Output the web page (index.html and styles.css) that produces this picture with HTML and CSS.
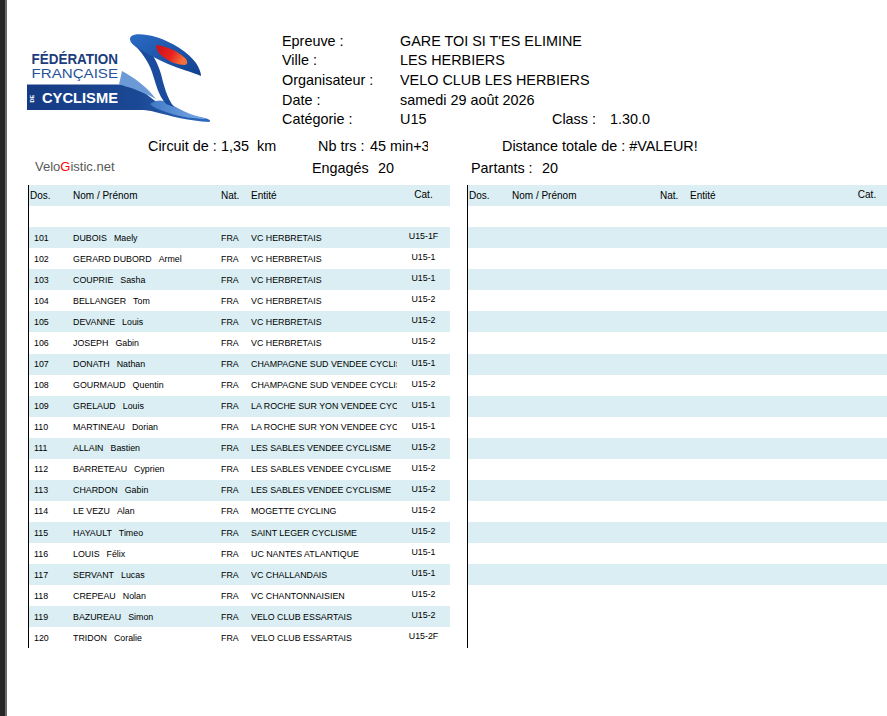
FILE: index.html
```html
<!DOCTYPE html>
<html lang="fr">
<head>
<meta charset="utf-8">
<title>Engagés - GARE TOI SI T'ES ELIMINE</title>
<link rel="stylesheet" href="styles.css">
</head>
<body>
<div class="page">
  <div class="edge"></div>
  <div class="sheet">
    <header class="top">
      <div class="logo-cell">
        <svg class="logo" width="190" height="92" viewBox="25 33 190 92" xmlns="http://www.w3.org/2000/svg">
          <defs>
            <linearGradient id="band" x1="0" y1="0" x2="1" y2="0">
              <stop offset="0" stop-color="#163a84"/>
              <stop offset="0.6" stop-color="#1b4894"/>
              <stop offset="1" stop-color="#2e6cc0"/>
            </linearGradient>
            <linearGradient id="blob" x1="0" y1="0" x2="1" y2="1">
              <stop offset="0" stop-color="#2a6cc4"/>
              <stop offset="1" stop-color="#123f8e"/>
            </linearGradient>
            <linearGradient id="red" x1="0" y1="0" x2="1" y2="0.4">
              <stop offset="0" stop-color="#c9101a"/>
              <stop offset="0.6" stop-color="#e8231f"/>
              <stop offset="1" stop-color="#f4703a"/>
            </linearGradient>
            <linearGradient id="sweep" x1="0" y1="0" x2="1" y2="0">
              <stop offset="0" stop-color="#3f78c6"/>
              <stop offset="1" stop-color="#7eaee6"/>
            </linearGradient>
          </defs>
          <text x="31.5" y="63.5" font-family="Liberation Sans, Arial, sans-serif" font-weight="700" font-size="14.5" fill="#1b3d7d" textLength="86.5" lengthAdjust="spacingAndGlyphs">FÉDÉRATION</text>
          <text x="31.5" y="78" font-family="Liberation Sans, Arial, sans-serif" font-size="13.5" fill="#26529a" textLength="86.5" lengthAdjust="spacingAndGlyphs">FRANÇAISE</text>
          <path d="M27,84.5 L121,84.5 C132,84.5 142,90 150,97 C160,106 180,114 205,118 C209,119 212,121 209,122 C190,121 170,116 155,112 C150,110.5 145,110 140,110 L27,110 Z" fill="url(#band)"/>
          <path d="M119,84.5 L122,71 C135,78 147,87 156,99 C150,96 142,92 134,89 C128,87 123,85.5 119,84.5 Z" fill="#6b9ad6"/>
          <path d="M150,104 C158,98 166,100 174,106 C186,113 198,117 208,119 C196,119 180,117 166,112 C160,110 154,108 150,104 Z" fill="url(#sweep)"/>
          <path d="M132,43 C140,50 148,60 152,72 C156,84 158,95 166,104 L174,107 C167,98 164,86 161,74 C157,60 150,50 141,42 Z" fill="#1b4b9c"/>
          <path d="M130,39 C130,33 142,33 156,37 C172,42 188,52 196,63 C199,68 201,72 201,76 C192,72 180,69 168,64 C156,59 146,53 138,48 C133,45 130,42 130,39 Z" fill="url(#blob)"/>
          <path d="M156,45 C166,46 178,51 185,58 C188,61 188,64 185,65 C177,65 168,61 162,56 C158,53 156,49 156,45 Z" fill="url(#red)"/>
          <text x="0" y="0" transform="translate(33.5,102.5) rotate(-90)" font-family="Liberation Sans, Arial, sans-serif" font-weight="700" font-size="5.5" fill="#ffffff">DE</text>
          <text x="42" y="103" font-family="Liberation Sans, Arial, sans-serif" font-weight="700" font-size="15" fill="#ffffff" textLength="76" lengthAdjust="spacingAndGlyphs">CYCLISME</text>
        </svg>
      </div>
      <div class="info">
        <span>Epreuve :</span><span>GARE TOI SI T'ES ELIMINE</span>
        <span>Ville :</span><span>LES HERBIERS</span>
        <span>Organisateur :</span><span>VELO CLUB LES HERBIERS</span>
        <span>Date :</span><span>samedi 29 août 2026</span>
        <span>Catégorie :</span><span class="cat-val"><span class="u15">U15</span><span class="cls">Class :</span><span>1.30.0</span></span>
      </div>
    </header>

    <div class="meta1">
      <span class="m-circ">Circuit de :</span><span class="m-len">1,35</span><span class="m-km">km</span><span class="m-nb">Nb trs :</span><span class="m-trs">45 min+3</span><span class="m-dist">Distance totale de : #VALEUR!</span>
    </div>
    <div class="meta2">
      <span class="velo">Velo<span class="g">G</span>istic.net</span><span class="eng">Engagés</span><span class="eng-n">20</span><span class="part">Partants :</span><span>20</span>
    </div>

    <div class="tables">
      <div class="tbl">
        <div class="row hd"><span class="c-dos">Dos.</span><span>Nom / Prénom</span><span>Nat.</span><span>Entité</span><span class="c-cat">Cat.</span></div>
        <div class="row"></div>
        <div class="row alt"><span class="c-dos">101</span><span>DUBOIS<span class="fn">Maely</span></span><span>FRA</span><span>VC HERBRETAIS</span><span class="c-cat">U15-1F</span></div>
        <div class="row"><span class="c-dos">102</span><span>GERARD DUBORD<span class="fn">Armel</span></span><span>FRA</span><span>VC HERBRETAIS</span><span class="c-cat">U15-1</span></div>
        <div class="row alt"><span class="c-dos">103</span><span>COUPRIE<span class="fn">Sasha</span></span><span>FRA</span><span>VC HERBRETAIS</span><span class="c-cat">U15-1</span></div>
        <div class="row"><span class="c-dos">104</span><span>BELLANGER<span class="fn">Tom</span></span><span>FRA</span><span>VC HERBRETAIS</span><span class="c-cat">U15-2</span></div>
        <div class="row alt"><span class="c-dos">105</span><span>DEVANNE<span class="fn">Louis</span></span><span>FRA</span><span>VC HERBRETAIS</span><span class="c-cat">U15-2</span></div>
        <div class="row"><span class="c-dos">106</span><span>JOSEPH<span class="fn">Gabin</span></span><span>FRA</span><span>VC HERBRETAIS</span><span class="c-cat">U15-2</span></div>
        <div class="row alt"><span class="c-dos">107</span><span>DONATH<span class="fn">Nathan</span></span><span>FRA</span><span>CHAMPAGNE SUD VENDEE CYCLISME</span><span class="c-cat">U15-1</span></div>
        <div class="row"><span class="c-dos">108</span><span>GOURMAUD<span class="fn">Quentin</span></span><span>FRA</span><span>CHAMPAGNE SUD VENDEE CYCLISME</span><span class="c-cat">U15-2</span></div>
        <div class="row alt"><span class="c-dos">109</span><span>GRELAUD<span class="fn">Louis</span></span><span>FRA</span><span>LA ROCHE SUR YON VENDEE CYCLISME</span><span class="c-cat">U15-1</span></div>
        <div class="row"><span class="c-dos">110</span><span>MARTINEAU<span class="fn">Dorian</span></span><span>FRA</span><span>LA ROCHE SUR YON VENDEE CYCLISME</span><span class="c-cat">U15-1</span></div>
        <div class="row alt"><span class="c-dos">111</span><span>ALLAIN<span class="fn">Bastien</span></span><span>FRA</span><span>LES SABLES VENDEE CYCLISME</span><span class="c-cat">U15-2</span></div>
        <div class="row"><span class="c-dos">112</span><span>BARRETEAU<span class="fn">Cyprien</span></span><span>FRA</span><span>LES SABLES VENDEE CYCLISME</span><span class="c-cat">U15-2</span></div>
        <div class="row alt"><span class="c-dos">113</span><span>CHARDON<span class="fn">Gabin</span></span><span>FRA</span><span>LES SABLES VENDEE CYCLISME</span><span class="c-cat">U15-2</span></div>
        <div class="row"><span class="c-dos">114</span><span>LE VEZU<span class="fn">Alan</span></span><span>FRA</span><span>MOGETTE CYCLING</span><span class="c-cat">U15-2</span></div>
        <div class="row alt"><span class="c-dos">115</span><span>HAYAULT<span class="fn">Timeo</span></span><span>FRA</span><span>SAINT LEGER CYCLISME</span><span class="c-cat">U15-2</span></div>
        <div class="row"><span class="c-dos">116</span><span>LOUIS<span class="fn">Félix</span></span><span>FRA</span><span>UC NANTES ATLANTIQUE</span><span class="c-cat">U15-1</span></div>
        <div class="row alt"><span class="c-dos">117</span><span>SERVANT<span class="fn">Lucas</span></span><span>FRA</span><span>VC CHALLANDAIS</span><span class="c-cat">U15-1</span></div>
        <div class="row"><span class="c-dos">118</span><span>CREPEAU<span class="fn">Nolan</span></span><span>FRA</span><span>VC CHANTONNAISIEN</span><span class="c-cat">U15-2</span></div>
        <div class="row alt"><span class="c-dos">119</span><span>BAZUREAU<span class="fn">Simon</span></span><span>FRA</span><span>VELO CLUB ESSARTAIS</span><span class="c-cat">U15-2</span></div>
        <div class="row"><span class="c-dos">120</span><span>TRIDON<span class="fn">Coralie</span></span><span>FRA</span><span>VELO CLUB ESSARTAIS</span><span class="c-cat">U15-2F</span></div>
      </div>

      <div class="tbl tbl-right">
        <div class="row hd"><span class="c-dos">Dos.</span><span>Nom / Prénom</span><span>Nat.</span><span>Entité</span><span class="c-cat">Cat.</span></div>
        <div class="row"></div>
        <div class="row alt"></div><div class="row"></div>
        <div class="row alt"></div><div class="row"></div>
        <div class="row alt"></div><div class="row"></div>
        <div class="row alt"></div><div class="row"></div>
        <div class="row alt"></div><div class="row"></div>
        <div class="row alt"></div><div class="row"></div>
        <div class="row alt"></div><div class="row"></div>
        <div class="row alt"></div><div class="row"></div>
        <div class="row alt"></div><div class="row"></div>
      </div>
    </div>
  </div>
</div>
</body>
</html>
```

FILE: styles.css
```css
html, body {
  margin: 0;
  padding: 0;
  background: #ffffff;
}

body {
  font-family: "Liberation Sans", Arial, sans-serif;
  color: #000000;
}

.page {
  display: flex;
  width: 887px;
  height: 716px;
  overflow: hidden;
}

.edge {
  flex: none;
  width: 7px;
  background: linear-gradient(to right, #262626 0, #262626 5px, #6a6a6a 5px, #6a6a6a 7px);
}

.sheet {
  flex: 1;
  min-width: 0;
  overflow: hidden;
  background: #ffffff;
}

/* ---------- header ---------- */
.top {
  display: flex;
  padding-top: 31.5px;
  height: 98.5px;
}

.logo-cell {
  flex: none;
  width: 275px;
}

.logo {
  display: block;
  margin-left: 18px;
  margin-top: 1.5px;
}

.info {
  display: grid;
  grid-template-columns: 118px auto;
  font-size: 14.4px;
  line-height: 19.7px;
  white-space: nowrap;
}

.cat-val {
  display: flex;
}

.u15 {
  width: 152px;
}

.cls {
  width: 58px;
}

.meta1 {
  display: flex;
  margin-top: 7px;
  padding-left: 141px;
  font-size: 14.4px;
  line-height: 19.7px;
  white-space: nowrap;
}

.m-circ { width: 73px; }
.m-len { width: 36px; }
.m-km { width: 61px; }
.m-nb { width: 52px; }
.m-trs { width: 58px; overflow: hidden; }
.m-dist { margin-left: 74px; }

.meta2 {
  display: flex;
  align-items: flex-start;
  padding-top: 2px;
  padding-left: 28px;
  font-size: 14.4px;
  line-height: 19.7px;
  white-space: nowrap;
}

.velo {
  width: 277px;
  font-size: 13px;
  line-height: 16px;
  color: #595959;
}

.velo .g {
  color: #ff0000;
}

.eng { width: 66px; }
.eng-n { width: 93px; }
.part { width: 71px; }

/* ---------- tables ---------- */
.tables {
  display: flex;
  gap: 17px;
  margin-top: 6.6px;
  padding-left: 21px;
}

.tbl {
  flex: none;
  width: 421px;
  border-left: 1px solid #000000;
}

.row {
  display: grid;
  grid-template-columns: 44px 148px 30px 146px 53px;
  height: 21.07px;
  align-items: center;
  font-size: 8.85px;
  line-height: 11px;
  white-space: nowrap;
}

.tbl-right {
  width: 430px;
}

.tbl-right .row {
  grid-template-columns: 44px 148px 30px 146px 62px;
}

.row > span {
  overflow: hidden;
  padding-top: 1px;
}

.row.alt,
.row.hd {
  background: #daeef3;
}

.row.hd {
  font-size: 10px;
}

.row.hd > span {
  padding-top: 0;
}

.c-dos {
  padding-left: 5px;
}

.row.hd .c-dos {
  padding-left: 1px;
}

.row > .c-cat {
  text-align: center;
  padding-top: 0;
  padding-bottom: 2px;
}

.fn {
  margin-left: 7px;
}
```
